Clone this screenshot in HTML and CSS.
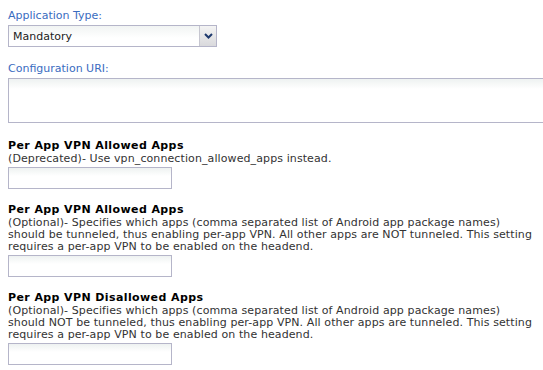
FILE: index.html
```html
<!DOCTYPE html>
<html>
<head>
<meta charset="utf-8">
<link rel="stylesheet" href="styles.css">
</head>
<body>
<div class="form">
  <div class="field">
    <label class="label">Application Type:</label>
    <div class="select">
      <span class="select-value">Mandatory</span>
      <span class="select-btn">
        <svg width="9" height="6" viewBox="0 0 9 6"><path d="M1 1 L4.5 4.5 L8 1" fill="none" stroke="#1f3a6e" stroke-width="2"/></svg>
      </span>
    </div>
  </div>
  <div class="field field-last">
    <label class="label">Configuration URI:</label>
    <div class="textarea"></div>
  </div>
  <div class="setting">
    <div class="heading">Per App VPN Allowed Apps</div>
    <div class="desc">(Deprecated)- Use vpn_connection_allowed_apps instead.</div>
    <div class="input"></div>
  </div>
  <div class="setting">
    <div class="heading">Per App VPN Allowed Apps</div>
    <div class="desc">(Optional)- Specifies which apps (comma separated list of Android app package names)<br>should be tunneled, thus enabling per-app VPN. All other apps are NOT tunneled. This setting<br>requires a per-app VPN to be enabled on the headend.</div>
    <div class="input"></div>
  </div>
  <div class="setting">
    <div class="heading">Per App VPN Disallowed Apps</div>
    <div class="desc">(Optional)- Specifies which apps (comma separated list of Android app package names)<br>should NOT be tunneled, thus enabling per-app VPN. All other apps are tunneled. This setting<br>requires a per-app VPN to be enabled on the headend.</div>
    <div class="input"></div>
  </div>
</div>
</body>
</html>
```
FILE: styles.css
```css
html, body {
  margin: 0;
  padding: 0;
  background: #fff;
  overflow: hidden;
}
body {
  font-family: "DejaVu Sans", sans-serif;
  font-size: 11px;
  color: #333;
}
.form {
  padding: 9px 0 0 8px;
  display: flex;
  flex-direction: column;
}
.field {
  display: flex;
  flex-direction: column;
  margin-bottom: 15px;
}
.field-last {
  margin-bottom: 16px;
}
.label {
  color: #3a6cbf;
  line-height: 14px;
  margin-bottom: 2px;
}
.select {
  width: 209px;
  height: 22px;
  box-sizing: border-box;
  border: 1px solid #b5b5c9;
  background: linear-gradient(#f1f4f3, #fff 60%);
  display: flex;
  align-items: center;
}
.select-value {
  flex: 1;
  padding-left: 4px;
  color: #222;
}
.select-btn {
  width: 17px;
  height: 100%;
  box-sizing: border-box;
  border-left: 1px solid #c6c6d0;
  background: linear-gradient(#f4f4f4, #d9d9dc);
  display: flex;
  align-items: center;
  justify-content: center;
}
.textarea {
  width: 560px;
  height: 45px;
  box-sizing: border-box;
  border: 1px solid #b5b5c9;
  background: linear-gradient(#eef2f1, #fff 10px);
}
.setting {
  display: flex;
  flex-direction: column;
  margin-bottom: 14px;
}
.heading {
  font-weight: bold;
  color: #000;
  line-height: 14px;
  letter-spacing: 0.4px;
}
.desc {
  color: #333;
  line-height: 12px;
  letter-spacing: 0.1px;
  margin-bottom: 2px;
}
.input {
  width: 164px;
  height: 22px;
  box-sizing: border-box;
  border: 1px solid #b5b5c9;
  background: linear-gradient(#eef2f1, #fff 8px);
}
```
